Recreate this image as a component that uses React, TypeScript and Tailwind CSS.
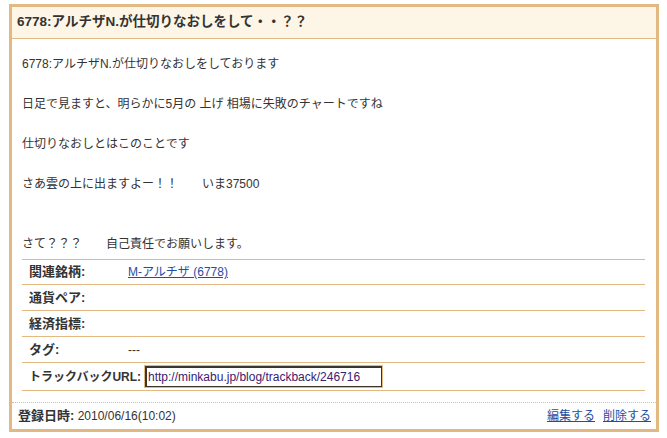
import React from "react";

const font = { fontFamily: '"Liberation Sans", Arial, "Noto Sans CJK JP", sans-serif' };

export default function App() {
  return (
    <div className="pt-1 pl-[9px] bg-white w-[667px] h-[438px]" style={font}>
      <div className="w-[650px] h-[428px] border-[3px] border-[#e2b983] bg-white flex flex-col">
        <div className="h-[32px] shrink-0 bg-[#fdf5e6] border-b border-[#e2b983] flex items-center pl-[5px] text-[13.5px] font-bold text-[#333] whitespace-nowrap">
          6778:アルチザN.が仕切りなおしをして・・？？
        </div>
        <div className="pl-[10px] pr-[11px] pt-[15px] pb-[11px] text-[12px] text-[#333]">
          <div className="leading-[20px] whitespace-nowrap">
            <div>6778:アルチザN.が仕切りなおしをしております</div>
            <div className="h-[20px]" />
            <div>日足で見ますと、明らかに5月の 上げ 相場に失敗のチャートですね</div>
            <div className="h-[20px]" />
            <div>仕切りなおしとはこのことです</div>
            <div className="h-[20px]" />
            <div>さあ雲の上に出ますよー！！　　いま37500</div>
            <div className="h-[20px]" />
            <div className="h-[20px]" />
            <div>さて？？？　　自己責任でお願いします。</div>
          </div>
          <div className="mt-[5px] border-t border-[#e2b983]">
            <div className="h-[25px] border-b border-[#e2b983] flex items-center pl-[7px]">
              <span className="w-[99px] shrink-0 font-bold text-[13px] whitespace-nowrap">関連銘柄:</span>
              <a href="#" className="text-[#1f4ea3] underline">M-アルチザ (6778)</a>
            </div>
            <div className="h-[26px] border-b border-[#e2b983] flex items-center pl-[7px]">
              <span className="w-[99px] shrink-0 font-bold text-[13px] whitespace-nowrap">通貨ペア:</span>
            </div>
            <div className="h-[26px] border-b border-[#e2b983] flex items-center pl-[7px]">
              <span className="w-[99px] shrink-0 font-bold text-[13px] whitespace-nowrap">経済指標:</span>
            </div>
            <div className="h-[26px] border-b border-[#e2b983] flex items-center pl-[7px]">
              <span className="w-[99px] shrink-0 font-bold text-[13px] whitespace-nowrap">タグ:</span>
              <span>---</span>
            </div>
            <div className="h-[28px] border-b border-[#e2b983] flex items-center pl-[7px]">
              <span className="font-bold text-[12px] w-[115px] shrink-0 whitespace-nowrap">トラックバックURL:</span>
              <div className="shrink-0 border border-[#e2b983]">
                <div className="w-[237px] h-[21px] border-t-2 border-l-2 border-b border-r border-[#3d342b] flex items-center pl-[1px] text-[12px] text-[#3a2070] whitespace-nowrap overflow-hidden">
                  http://minkabu.jp/blog/trackback/246716
                </div>
              </div>
            </div>
          </div>
        </div>
        <div className="flex-1 border-t border-dotted border-[#e2b983] flex items-center justify-between pl-[6px] pr-[5px] text-[12px] text-[#333]">
          <div className="whitespace-nowrap">
            <span className="font-bold text-[13px]">登録日時:</span> 2010/06/16(10:02)
          </div>
          <div className="flex gap-[8px]">
            <a href="#" className="text-[#1f4ea3] underline">編集する</a>
            <a href="#" className="text-[#1f4ea3] underline">削除する</a>
          </div>
        </div>
      </div>
    </div>
  );
}
